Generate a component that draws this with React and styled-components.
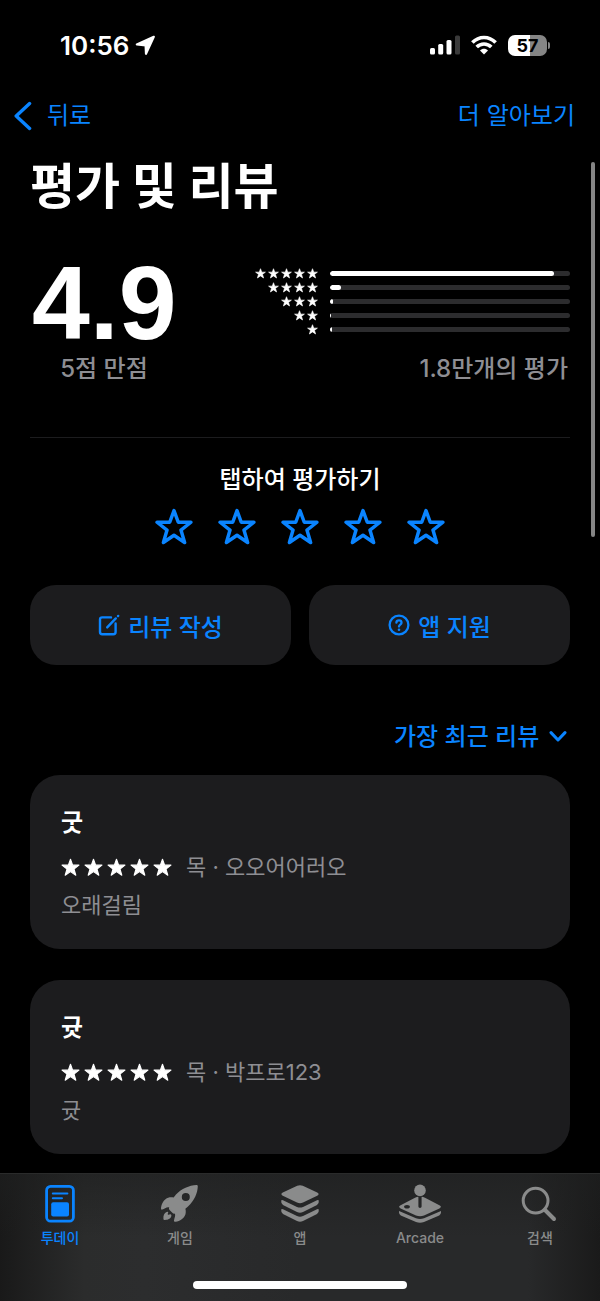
import React, { useState } from 'react'
import styled, { createGlobalStyle } from 'styled-components'

const BLUE = '#0a84ff'
const GREY = '#8e8e93'
const CARD = '#1c1c1e'

const GlobalStyle = createGlobalStyle`
  * {
    box-sizing: border-box;
  }
  body {
    margin: 0;
    background: #000;
    color: #fff;
    font-family: Inter, 'Noto Sans CJK KR', sans-serif;
  }
  button, select {
    margin: 0;
    padding: 0;
    border: 0;
    background: none;
    color: inherit;
    font: inherit;
    cursor: pointer;
  }
  svg {
    display: block;
    flex: none;
  }
`

const Page = styled.div`
  position: relative;
  display: flex;
  flex-direction: column;
  min-height: 100vh;
`

const StatusBar = styled.header`
  display: flex;
  align-items: center;
  justify-content: space-between;
  height: 90px;
  padding: 0 50px 0 60px;
`

const StatusGroup = styled.div`
  display: flex;
  align-items: center;
  gap: ${({ $gap }) => $gap}px;
`

const Time = styled.span`
  font-size: 26px;
  font-weight: 600;
`

const Battery = styled.div`
  display: flex;
  align-items: center;
  gap: 1px;
`

const BatteryBody = styled.div`
  width: 39px;
  border-radius: 7px;
  background: linear-gradient(90deg, #fff 57%, #858585 57%);
  color: #000;
  font-size: 18px;
  font-weight: 700;
  line-height: 21px;
  text-align: center;
`

const BatteryCap = styled.div`
  width: 2px;
  height: 7px;
  border-radius: 0 2px 2px 0;
  background: #858585;
`

const NavBar = styled.nav`
  display: flex;
  align-items: center;
  justify-content: space-between;
  height: 50px;
  padding: 2px 25px 0 14px;
`

const NavLink = styled.a`
  display: flex;
  align-items: center;
  gap: 15px;
  color: ${BLUE};
  font-size: 24px;
  line-height: 32px;
  text-decoration: none;
`

const Main = styled.main`
  flex: 1;
  padding: 15px 30px 19px;
`

const Title = styled.h1`
  margin: 0 0 44px;
  font-size: 49px;
  font-weight: 700;
  line-height: 64px;
`

const Summary = styled.section`
  display: grid;
  grid-template-columns: 148px 1fr;
  row-gap: 10px;
  padding-bottom: 52px;
  border-bottom: 1px solid ${CARD};
`

const Score = styled.div`
  padding-left: 2px;
  font-family: 'Liberation Sans', sans-serif;
  font-size: 104px;
  font-weight: 700;
  line-height: 80px;
`

const SummaryLabel = styled.div`
  padding-right: ${({ $align }) => ($align === 'right' ? 2 : 0)}px;
  color: ${GREY};
  font-size: 24px;
  font-weight: 500;
  line-height: 32px;
  text-align: ${({ $align }) => $align};
`

const Histogram = styled.div`
  padding-top: 3px;
`

const HistogramRow = styled.div`
  display: flex;
  align-items: center;
  justify-content: flex-end;
  gap: 12px;
  height: 14px;
`

const Track = styled.div`
  width: 240px;
  height: 5px;
  border-radius: 3px;
  background: #2c2c2e;
  overflow: hidden;
`

const Fill = styled.div`
  height: 100%;
  border-radius: 3px;
  background: #fff;
`

const Stars = styled.div`
  display: flex;
  gap: ${({ $gap }) => $gap}px;
  color: #fff;
`

const TapToRate = styled.section`
  display: flex;
  flex-direction: column;
  align-items: center;
  gap: 12px;
  padding: 26px 0 39px;
`

const TapLabel = styled.h2`
  margin: 0;
  font-size: 24px;
  font-weight: 500;
  line-height: 32px;
`

const RateButton = styled.button`
  color: ${BLUE};
`

const Actions = styled.div`
  display: grid;
  grid-template-columns: 1fr 1fr;
  gap: 18px;
`

const ActionButton = styled.button`
  display: flex;
  align-items: center;
  justify-content: center;
  gap: 8px;
  height: 80px;
  border-radius: 26px;
  background: ${CARD};
  color: ${BLUE};
  font-size: 24px;
  font-weight: 500;
`

const SortRow = styled.label`
  display: flex;
  align-items: center;
  justify-content: flex-end;
  gap: 9px;
  padding: 56px 3px 22px 0;
  color: ${BLUE};
`

const SortSelect = styled.select`
  appearance: none;
  height: 32px;
  font-size: 24px;
  font-weight: 500;
  line-height: 32px;
`

const Reviews = styled.div`
  display: flex;
  flex-direction: column;
  gap: 31px;
`

const Card = styled.article`
  padding: 32px 31px 25px;
  border-radius: 30px;
  background: ${CARD};
`

const CardTitle = styled.h3`
  margin: 0 0 9px;
  font-size: 24px;
  font-weight: 700;
  line-height: 32px;
`

const CardMeta = styled.div`
  display: flex;
  align-items: center;
  gap: 14px;
  color: ${GREY};
  font-size: 22px;
  line-height: 38px;
`

const CardBody = styled.p`
  margin: 0;
  color: ${GREY};
  font-size: 22px;
  line-height: 38px;
`

const ScrollThumb = styled.div`
  position: absolute;
  top: 162px;
  right: 5px;
  width: 4px;
  height: 375px;
  border-radius: 2px;
  background: #858585;
`

const TabBar = styled.footer`
  padding: 10px 0 12px;
  border-top: 1px solid #2a2b2b;
  background:
    linear-gradient(180deg, rgba(30, 31, 31, 0.6), rgba(30, 31, 31, 0) 50%),
    linear-gradient(90deg, #191919, #2b2c2c 14%, #2c2d2e 24%, #28292a 50%, #28292a 88%, #1a1a1a);
`

const Tabs = styled.nav`
  display: grid;
  grid-template-columns: repeat(5, 1fr);
`

const Tab = styled.a`
  display: flex;
  flex-direction: column;
  align-items: center;
  gap: 4px;
  color: ${({ $active }) => ($active ? BLUE : '#8a8b8b')};
  font-size: 14px;
  font-weight: 500;
  line-height: 20px;
  text-decoration: none;
`

const HomeIndicator = styled.div`
  width: 214px;
  height: 8px;
  margin: 33px auto 0;
  border-radius: 4px;
  background: #fff;
`

const StarIcon = ({ size, outline }) => (
  <svg width={size} height={size} viewBox="0 0 24 24" aria-hidden="true">
    <path
      d="M12 1.6 L14.7 9 H22.7 L16.4 13.9 L18.7 21.8 L12 17.2 L5.3 21.8 L7.6 13.9 L1.3 9 H9.3 Z"
      fill={outline ? 'none' : 'currentColor'}
      stroke="currentColor"
      strokeWidth={outline ? 2.2 : 1.4}
      strokeLinejoin="round"
    />
  </svg>
)

const StarRow = ({ count, size, gap }) => (
  <Stars $gap={gap} role="img" aria-label={`별 ${count}개`}>
    {Array.from({ length: count }, (_, i) => <StarIcon key={i} size={size} />)}
  </Stars>
)

const LocationIcon = () => (
  <svg width="21" height="21" viewBox="0 0 21 21" fill="currentColor" stroke="currentColor" strokeWidth="2.2" strokeLinejoin="round">
    <path d="M18.8 1.8 L1.8 9.4 L10.6 10.4 L11 18.8 Z" />
  </svg>
)

const SignalIcon = () => (
  <svg width="30" height="20" viewBox="0 0 30 20" fill="#fff">
    <rect x="0" y="13" width="5" height="6.5" rx="1.5" />
    <rect x="8.2" y="9" width="5" height="10.5" rx="1.5" />
    <rect x="16.5" y="5" width="5" height="14.5" rx="1.5" />
    <rect x="25" y="0.5" width="5" height="19" rx="1.5" fill="#3a3a3a" />
  </svg>
)

const WifiIcon = () => (
  <svg width="26" height="20" viewBox="0 0 26 20" fill="none" stroke="#fff" strokeWidth="3.6">
    <path d="M1.4 7.6 C8 .7 18 .7 24.6 7.6" />
    <path d="M5.7 12 C9.8 7.9 16.2 7.9 20.3 12" />
    <path d="M13 19.5 L9 15.5 C11.3 13.3 14.7 13.3 17 15.5 Z" fill="#fff" stroke="none" />
  </svg>
)

const BackIcon = () => (
  <svg width="18" height="30" viewBox="0 0 18 30" fill="none" stroke="currentColor" strokeWidth="3.4" strokeLinecap="round" strokeLinejoin="round">
    <path d="M15.6 2.6 L2.2 15 L15.6 27.4" />
  </svg>
)

const ComposeIcon = () => (
  <svg width="22" height="22" viewBox="0 0 22 22" fill="none" stroke="currentColor" strokeWidth="2.4" strokeLinecap="round" strokeLinejoin="round">
    <path d="M13 3.4 H4.2 Q2 3.4 2 5.6 V18 Q2 20.2 4.2 20.2 H15.4 Q17.6 20.2 17.6 18 V9.4" />
    <path d="M9.2 13.4 L17.8 4.4 M20 2.1 L20.2 1.9" />
  </svg>
)

const HelpIcon = () => (
  <svg width="22" height="22" viewBox="0 0 22 22" fill="none" stroke="currentColor" strokeWidth="2.3" strokeLinecap="round" strokeLinejoin="round">
    <circle cx="11" cy="11" r="9.4" />
    <path d="M8.4 8.6 C8.6 5.7 13.5 5.7 13.5 8.7 C13.5 10.6 11 10.7 11 12.6" />
    <path d="M11 15.7 V15.8" strokeWidth="2.6" />
  </svg>
)

const ChevronDown = () => (
  <svg width="18" height="12" viewBox="0 0 18 12" fill="none" stroke="currentColor" strokeWidth="3" strokeLinecap="round" strokeLinejoin="round">
    <path d="M2 1.6 L9 9 L16 1.6" />
  </svg>
)

const TabIcon = ({ children }) => (
  <svg width="44" height="40" viewBox="-2 0 44 40" fill="currentColor" aria-hidden="true">
    {children}
  </svg>
)

const TodayIcon = () => (
  <TabIcon>
    <rect x="6.6" y="2.4" width="26.8" height="34.8" rx="4" fill="none" stroke="currentColor" strokeWidth="2.8" />
    <path d="M12.8 9.4 H27.4 M12.8 14.2 H22" fill="none" stroke="currentColor" strokeWidth="2" strokeLinecap="round" />
    <rect x="11.2" y="18.2" width="17.8" height="14.4" rx="2" />
  </TabIcon>
)

const RocketIcon = () => (
  <TabIcon>
    <path
      fillRule="evenodd"
      d="M36.6 1 Q37.8 1 37.8 2.2 C37.6 9 34.4 16.4 28 22.4 L25.4 24.8 C26.8 30.6 24.4 34.4 18.8 37 C16.4 38.2 13.6 38.2 14 36.4 C14.4 34 15.6 32.4 15 29.6 Q13.6 30.2 12.6 29 L9.8 26.2 Q8.4 24.8 9.2 23.4 C6.6 22.8 4.4 24.8 2.4 25.6 C.6 26.2 .8 23.6 1.8 20.6 C3.8 15 8 12.4 13.6 13.4 L16 10.6 C21.6 4.6 29 1.4 36.6 1 Z M25.8 9 A4 4 0 1 0 25.8 17 A4 4 0 1 0 25.8 9 Z"
    />
    <path d="M6.6 28 Q8.4 27 8.2 28.8 C7.2 30.2 7.6 31.4 9.4 30.4 Q11.2 29.8 11.4 31.6 C11.2 34.6 7.8 36.2 4.4 36 Q3.4 36 3.4 34.8 C3.2 31.4 4.2 29 6.6 28 Z" />
  </TabIcon>
)

const AppsIcon = () => (
  <TabIcon>
    <path d="M17.2 1.7 Q20 .6 22.8 1.7 L37.2 8.6 Q40 10.2 37.2 11.8 L23 18.6 Q20 20 17 18.6 L2.8 11.8 Q0 10.2 2.8 8.6 Z" />
    <path d="M1.2 16.6 Q1.6 15.4 3 16.2 L17 22.9 Q20 24.2 23 22.9 L37 16.2 Q38.4 15.4 38.8 16.6 Q39.2 19.8 37 21 L23 28 Q20 29.4 17 28 L3 21 Q.8 19.8 1.2 16.6 Z" />
    <path d="M1.2 25.6 Q1.6 24.4 3 25.2 L17 32 Q20 33.4 23 32 L37 25.2 Q38.4 24.4 38.8 25.6 Q39.2 28.8 37 30 L23 37 Q20 38.4 17 37 L3 30 Q.8 28.8 1.2 25.6 Z" />
  </TabIcon>
)

const ArcadeIcon = () => (
  <TabIcon>
    <circle cx="20" cy="6.4" r="5.8" />
    <path
      fillRule="evenodd"
      d="M15 13.8 L.6 21.2 Q-2.4 22.8 .6 24.4 L16 31.6 Q20 33 24 31.6 L39.4 24.4 Q42.4 22.8 39.4 21.2 L25 13.8 Q23 12.8 21.6 12.8 V22.6 Q21.6 24 20 24 Q18.4 24 18.4 22.6 V12.8 Q17 12.8 15 13.8 Z M7 21 A2.9 1.8 0 1 0 7 24.6 A2.9 1.8 0 1 0 7 21 Z"
    />
    <path d="M-1 27 L16 34.2 Q20 35.8 24 34.2 L41 27 V28.6 Q41 30.4 39.2 31.4 L24 38 Q20 39.6 16 38 L.8 31.4 Q-1 30.4 -1 28.6 Z" />
  </TabIcon>
)

const SearchIcon = () => (
  <TabIcon>
    <circle cx="15.6" cy="16.6" r="12.4" fill="none" stroke="currentColor" strokeWidth="3" />
    <path d="M25 26 L34 35" fill="none" stroke="currentColor" strokeWidth="4" strokeLinecap="round" />
  </TabIcon>
)

const histogram = [
  { stars: 5, percent: 93.5 },
  { stars: 4, percent: 4.4 },
  { stars: 3, percent: 1.3 },
  { stars: 2, percent: 0.4 },
  { stars: 1, percent: 0.7 },
]

const reviews = [
  { title: '굿', stars: 5, day: '목', author: '오오어어러오', body: '오래걸림' },
  { title: '귯', stars: 5, day: '목', author: '박프로123', body: '귯' },
]

const tabs = [
  { label: '투데이', Icon: TodayIcon },
  { label: '게임', Icon: RocketIcon },
  { label: '앱', Icon: AppsIcon },
  { label: 'Arcade', Icon: ArcadeIcon },
  { label: '검색', Icon: SearchIcon },
]

const App = () => {
  const [rating, setRating] = useState(0)
  const [active, setActive] = useState('투데이')

  return (
    <Page lang="ko">
      <GlobalStyle />
      <StatusBar>
        <StatusGroup $gap={6}>
          <Time>10:56</Time>
          <LocationIcon />
        </StatusGroup>
        <StatusGroup $gap={11}>
          <SignalIcon />
          <WifiIcon />
          <Battery>
            <BatteryBody>57</BatteryBody>
            <BatteryCap />
          </Battery>
        </StatusGroup>
      </StatusBar>
      <NavBar>
        <NavLink href="#back"><BackIcon />뒤로</NavLink>
        <NavLink href="#more">더 알아보기</NavLink>
      </NavBar>
      <Main>
        <Title>평가 및 리뷰</Title>
        <Summary>
          <Score>4.9</Score>
          <Histogram>
            {histogram.map(({ stars, percent }) => (
              <HistogramRow key={stars}>
                <StarRow count={stars} size={11} gap={2} />
                <Track><Fill style={{ width: `${percent}%` }} /></Track>
              </HistogramRow>
            ))}
          </Histogram>
          <SummaryLabel $align="center">5점 만점</SummaryLabel>
          <SummaryLabel $align="right">1.8만개의 평가</SummaryLabel>
        </Summary>
        <TapToRate>
          <TapLabel>탭하여 평가하기</TapLabel>
          <Stars $gap={25}>
            {[1, 2, 3, 4, 5].map((n) => (
              <RateButton key={n} type="button" aria-label={`별점 ${n}점`} onClick={() => setRating(n)}>
                <StarIcon size={38} outline={n > rating} />
              </RateButton>
            ))}
          </Stars>
        </TapToRate>
        <Actions>
          <ActionButton type="button"><ComposeIcon />리뷰 작성</ActionButton>
          <ActionButton type="button"><HelpIcon />앱 지원</ActionButton>
        </Actions>
        <SortRow>
          <SortSelect aria-label="정렬">
            <option>가장 최근 리뷰</option>
          </SortSelect>
          <ChevronDown />
        </SortRow>
        <Reviews>
          {reviews.map(({ title, stars, day, author, body }) => (
            <Card key={title}>
              <CardTitle>{title}</CardTitle>
              <CardMeta>
                <StarRow count={stars} size={19} gap={4} />
                <span>{day} · {author}</span>
              </CardMeta>
              <CardBody>{body}</CardBody>
            </Card>
          ))}
        </Reviews>
      </Main>
      <TabBar>
        <Tabs>
          {tabs.map(({ label, Icon }) => (
            <Tab key={label} href={`#${label}`} $active={label === active} onClick={() => setActive(label)}>
              <Icon />
              {label}
            </Tab>
          ))}
        </Tabs>
        <HomeIndicator />
      </TabBar>
      <ScrollThumb />
    </Page>
  )
}

export default App
